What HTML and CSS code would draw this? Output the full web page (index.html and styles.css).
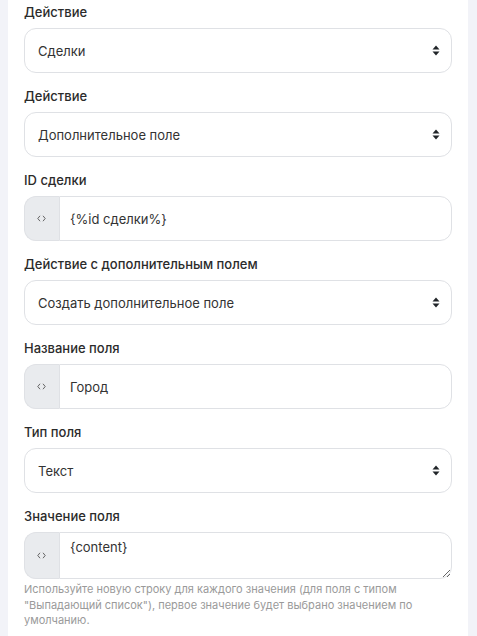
FILE: index.html
```html
<!DOCTYPE html>
<html lang="ru">
<head>
<meta charset="utf-8">
<link rel="stylesheet" href="styles.css">
</head>
<body>
<div class="card">
  <div class="group">
    <label class="label">Действие</label>
    <div class="select-wrap">
      <select class="control select"><option>Сделки</option></select>
      <svg class="caret" width="8" height="11" viewBox="0 0 8 11"><path d="M4 0.5 L7.5 4.5 H0.5 Z M4 10.5 L7.5 6.5 H0.5 Z" fill="#212529"/></svg>
    </div>
  </div>
  <div class="group">
    <label class="label">Действие</label>
    <div class="select-wrap">
      <select class="control select"><option>Дополнительное поле</option></select>
      <svg class="caret" width="8" height="11" viewBox="0 0 8 11"><path d="M4 0.5 L7.5 4.5 H0.5 Z M4 10.5 L7.5 6.5 H0.5 Z" fill="#212529"/></svg>
    </div>
  </div>
  <div class="group">
    <label class="label">ID сделки</label>
    <div class="input-group">
      <span class="addon"><svg width="9" height="7" viewBox="0 0 9 7"><path d="M3 0.8 L0.8 3.5 L3 6.2 M6 0.8 L8.2 3.5 L6 6.2" fill="none" stroke="#555" stroke-width="0.9"/></svg></span>
      <input class="control input" type="text" value="{%id сделки%}">
    </div>
  </div>
  <div class="group">
    <label class="label">Действие с дополнительным полем</label>
    <div class="select-wrap">
      <select class="control select"><option>Создать дополнительное поле</option></select>
      <svg class="caret" width="8" height="11" viewBox="0 0 8 11"><path d="M4 0.5 L7.5 4.5 H0.5 Z M4 10.5 L7.5 6.5 H0.5 Z" fill="#212529"/></svg>
    </div>
  </div>
  <div class="group">
    <label class="label">Название поля</label>
    <div class="input-group">
      <span class="addon"><svg width="9" height="7" viewBox="0 0 9 7"><path d="M3 0.8 L0.8 3.5 L3 6.2 M6 0.8 L8.2 3.5 L6 6.2" fill="none" stroke="#555" stroke-width="0.9"/></svg></span>
      <input class="control input" type="text" value="Город">
    </div>
  </div>
  <div class="group">
    <label class="label">Тип поля</label>
    <div class="select-wrap">
      <select class="control select"><option>Текст</option></select>
      <svg class="caret" width="8" height="11" viewBox="0 0 8 11"><path d="M4 0.5 L7.5 4.5 H0.5 Z M4 10.5 L7.5 6.5 H0.5 Z" fill="#212529"/></svg>
    </div>
  </div>
  <div class="group last">
    <label class="label">Значение поля</label>
    <div class="input-group">
      <span class="addon"><svg width="9" height="7" viewBox="0 0 9 7"><path d="M3 0.8 L0.8 3.5 L3 6.2 M6 0.8 L8.2 3.5 L6 6.2" fill="none" stroke="#555" stroke-width="0.9"/></svg></span>
      <textarea class="control textarea">{content}</textarea>
    </div>
    <p class="help">Используйте новую строку для каждого значения (для поля с типом "Выпадающий список"), первое значение будет выбрано значением по умолчанию.</p>
  </div>
</div>
</body>
</html>
```
FILE: styles.css
```css
* { box-sizing: border-box; }
html, body {
  margin: 0;
  padding: 0;
  background: #f2f3f8;
  font-family: Inter, "Noto Sans", sans-serif;
  color: #333;
}
body {
  padding: 0 9px 0 8px;
}
.card {
  background: #fff;
  padding: 4px 16px 10px 16px;
  min-height: 636px;
}
.group {
  margin-bottom: 15px;
}
.label {
  display: block;
  font-size: 13px;
  line-height: 16px;
  font-weight: 500;
  color: #2b2b2b;
  margin-bottom: 8px;
}
.control {
  font-family: Inter, "Noto Sans", sans-serif;
  font-size: 13px;
  color: #333;
  border: 1px solid #dfe1e5;
  border-radius: 12px;
  background: #fff;
  outline: none;
  margin: 0;
}
.select-wrap {
  position: relative;
}
.select {
  -webkit-appearance: none;
  appearance: none;
  width: 100%;
  height: 45px;
  padding: 0 30px 0 13px;
}
.caret {
  position: absolute;
  right: 12px;
  top: 17px;
  pointer-events: none;
}
.input-group {
  display: flex;
  align-items: stretch;
}
.addon {
  width: 35px;
  flex: none;
  display: flex;
  align-items: center;
  justify-content: center;
  background: #e9ebee;
  border: 1px solid #dfe1e5;
  border-right: none;
  border-radius: 12px 0 0 12px;
  padding-right: 2px;
}
.input-group .control {
  flex: 1;
  min-width: 0;
  border-radius: 0 12px 12px 0;
}
.input {
  height: 45px;
  padding: 0 10px;
}
.textarea {
  height: 47px;
  padding: 6px 10px;
  line-height: 16px;
  resize: vertical;
  display: block;
}
.help {
  margin: 3px 0 0 0;
  font-size: 11px;
  line-height: 15.5px;
  color: #9a9a9a;
}
```
